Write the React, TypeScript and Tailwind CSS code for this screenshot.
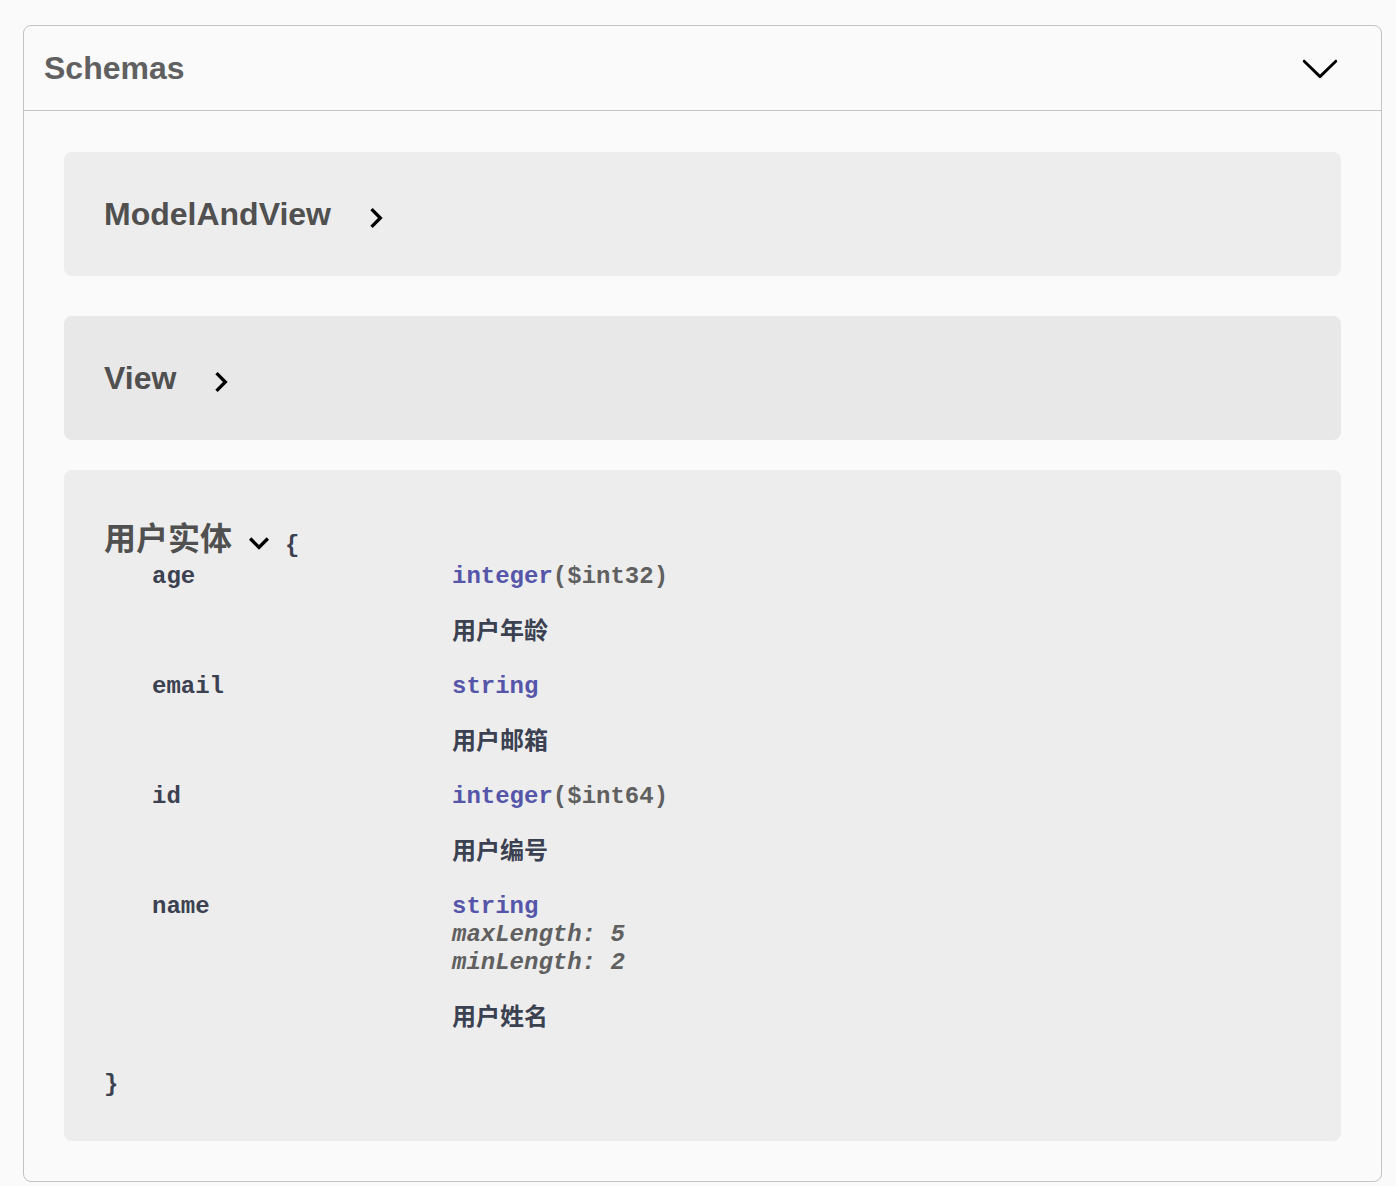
import React, { useState } from 'react';

interface Prop {
  name: string;
  type: string;
  format?: string;
  extra?: string[];
  desc: string;
}

const props: Prop[] = [
  { name: 'age', type: 'integer', format: '($int32)', desc: '用户年龄' },
  { name: 'email', type: 'string', desc: '用户邮箱' },
  { name: 'id', type: 'integer', format: '($int64)', desc: '用户编号' },
  { name: 'name', type: 'string', extra: ['maxLength: 5', 'minLength: 2'], desc: '用户姓名' },
];

const sans = "font-['Liberation_Sans','Noto_Sans_CJK_SC',sans-serif]";
const mono = "font-['Liberation_Mono','Noto_Sans_CJK_SC',monospace]";

const ChevronRight = () => (
  <svg width="40" height="40" viewBox="0 0 24 24" className="shrink-0 mt-[8px]">
    <path d="M10 6L8.59 7.41 13.17 12l-4.58 4.59L10 18l6-6z" fill="#000" />
  </svg>
);

const ChevronDown = () => (
  <svg width="40" height="40" viewBox="0 0 24 24" className="shrink-0">
    <path d="M7.41 8.59 12 13.17l4.59-4.58L18 10l-6 6-6-6z" fill="#000" />
  </svg>
);

const ClosedModel = ({ title, gapClass, bg }: { title: string; gapClass: string; bg: string }) => (
  <div className={`h-[124px] rounded-[8px] px-[40px] flex items-center cursor-pointer ${gapClass} ${bg}`}>
    <span className={`${sans} text-[32px] font-bold text-[#505050] leading-[40px]`}>{title}</span>
    <span className="ml-[25px] flex">
      <ChevronRight />
    </span>
  </div>
);

const App: React.FC = () => {
  const [open, setOpen] = useState(true);

  return (
    <div className="min-h-screen bg-[#fafafa] pl-[23px] pr-[14px] pt-[25px] pb-[4px]">
      <section className="border border-[#c1c3c7] rounded-[8px]">
        <div
          className="h-[85px] flex items-center justify-between pl-[20px] pr-[41px] border-b border-[#c1c3c7] cursor-pointer"
          onClick={() => setOpen(!open)}
        >
          <h4 className={`${sans} text-[32px] font-bold text-[#606060]`}>Schemas</h4>
          <svg width="40" height="40" viewBox="0 0 20 20">
            <path
              d="M17.418 6.109c.272-.268.709-.268.979 0s.271.701 0 .969l-7.908 7.83c-.27.268-.707.268-.979 0l-7.908-7.83c-.27-.268-.27-.701 0-.969.271-.268.709-.268.979 0L10 13.25l7.418-7.141z"
              fill="#000"
            />
          </svg>
        </div>

        {open && (
          <div className="px-[40px] pt-[41px] pb-[40px]">
            <ClosedModel title="ModelAndView" gapClass="mb-[40px]" bg="bg-[#ededed]" />
            <ClosedModel title="View" gapClass="mb-[30px]" bg="bg-[#e8e8e8]" />

            <div className="rounded-[8px] bg-[#ededed] px-[40px] pt-[49px] pb-[42px]">
              <div className="flex items-start h-[44px]">
                <span className={`${sans} text-[32px] font-bold text-[#505050] leading-[40px]`}>用户实体</span>
                <span className="ml-[7px] mt-[4px] flex">
                  <ChevronDown />
                </span>
                <span className={`${mono} text-[24px] font-bold text-[#3b4151] leading-[28px] mt-[13px] ml-[6px]`}>{'{'}</span>
              </div>

              <div className={`${mono} text-[24px] font-bold text-[#3b4151] leading-[28px]`}>
                {props.map((p) => (
                  <div key={p.name} className="flex mb-[28px]">
                    <div className="w-[348px] pl-[48px] shrink-0">{p.name}</div>
                    <div>
                      <div>
                        <span className="text-[#55a]">{p.type}</span>
                        {p.format && <span className="text-[#606060]">{p.format}</span>}
                      </div>
                      {p.extra?.map((e) => (
                        <div key={e} className="italic text-[#606060]">
                          {e}
                        </div>
                      ))}
                      <p className={`${sans} mt-[26px] text-[24px] font-bold text-[#3b4151]`}>{p.desc}</p>
                    </div>
                  </div>
                ))}
                <div className="mt-[40px]">{'}'}</div>
              </div>
            </div>
          </div>
        )}
      </section>
    </div>
  );
};

export default App;
